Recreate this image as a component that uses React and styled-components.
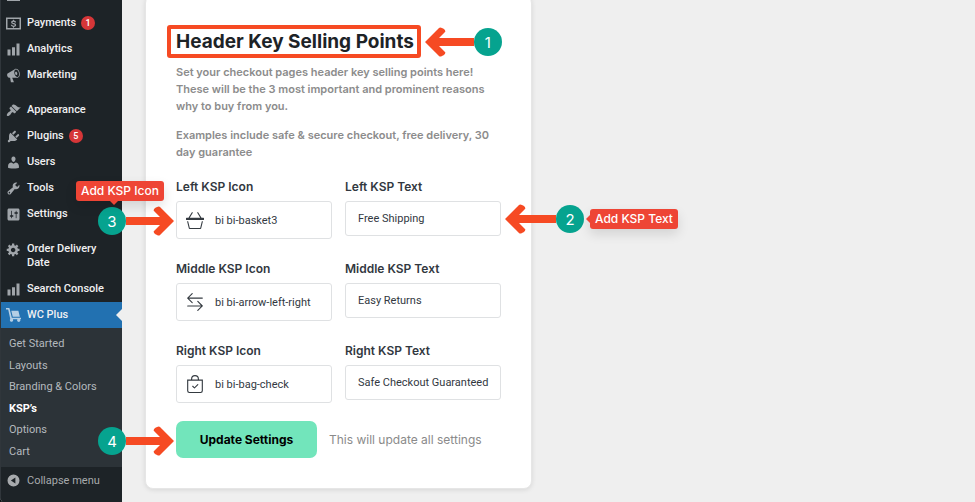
import React from "react";
import styled, { createGlobalStyle } from "styled-components";
import { BsBasket3, BsArrowLeftRight, BsBagCheck } from "react-icons/bs";

const GlobalStyle = createGlobalStyle`
  * {
    box-sizing: border-box;
  }
  body {
    margin: 0;
    background: #101417;
    font-family: Inter, "Liberation Sans", sans-serif;
    font-size: 11px;
  }
  input, button {
    font-family: inherit;
  }
`;

const Page = styled.div`
  display: flex;
  min-height: 100vh;
  background: #efefef;
  border-bottom-left-radius: 6px;
  overflow: hidden;
`;

const Sidebar = styled.nav`
  display: flex;
  flex-direction: column;
  flex: none;
  width: 122px;
  background: #1d2327;
  border-left: 1px solid #30363b;
  font-family: Roboto, "Liberation Sans", sans-serif;
`;

const MenuList = styled.ul`
  list-style: none;
  margin: 0;
  padding: 0;
`;

const MenuItem = styled.li`
  margin-top: ${(p) => (p.$spaced ? "9px" : "0")};
`;

const MenuLink = styled.a`
  position: relative;
  display: flex;
  align-items: flex-start;
  gap: 6px;
  padding: 6px 10px 6px 5px;
  line-height: 14px;
  font-weight: 500;
  color: #f0f0f1;
  text-decoration: none;
  background: ${(p) => (p.$active ? "#2271b1" : "transparent")};

  svg {
    flex: none;
    width: 15px;
    height: 15px;
    margin-bottom: -1px;
    fill: ${(p) => (p.$active ? "#b5cfe5" : "#a0a5aa")};
  }

  &::after {
    content: "";
    display: ${(p) => (p.$active ? "block" : "none")};
    position: absolute;
    right: 0;
    top: 7px;
    border: 6px solid transparent;
    border-left-width: 0;
    border-right-color: #efefef;
  }
`;

// bottom of the menu entry that is scrolled out of view
const ScrolledItem = styled.div`
  display: flex;
  align-items: flex-start;
  height: 10px;
  padding-left: 6px;

  &::before {
    content: "";
    width: 13px;
    height: 1px;
    background: #a0a5aa;
  }
`;

const Count = styled.span`
  display: inline-block;
  width: 14px;
  height: 14px;
  margin-left: 5px;
  border-radius: 50%;
  background: #d63638;
  color: #fff;
  font-size: 9px;
  text-align: center;
  vertical-align: top;
`;

const SubMenu = styled.ul`
  display: flex;
  flex-direction: column;
  flex: 1;
  justify-content: space-between;
  list-style: none;
  margin: 0;
  padding: 5px 8px;
  background: #2c3338;
`;

const SubLink = styled.a`
  display: block;
  line-height: 21px;
  font-size: 11px;
  font-weight: ${(p) => (p.$current ? 700 : 400)};
  color: ${(p) => (p.$current ? "#fff" : "#b4b9be")};
  text-decoration: none;
`;

const Collapse = styled.button`
  display: flex;
  align-items: center;
  gap: 6px;
  height: 36px;
  padding: 0 0 10px 5px;
  border: 0;
  background: none;
  color: #a7aaad;
  font-size: 11px;
  white-space: nowrap;

  svg {
    width: 15px;
    height: 15px;
    fill: #a7aaad;
  }
`;

const Main = styled.main`
  flex: 1;
  min-width: 0;
  padding: 0 23px 14px;
`;

const Card = styled.form`
  max-width: 387px;
  margin-top: -5px;
  padding: 29px 30px 30px;
  background: #fff;
  border: 1px solid #e6e6e6;
  border-radius: 8px;
  box-shadow: 0 1px 5px rgba(0, 0, 0, 0.1);
`;

const TitleRow = styled.div`
  display: flex;
  margin: 0 -9px;
`;

const Title = styled.h1`
  margin: 0;
  padding: 0 3px 0 5px;
  border: 4px solid #f64a23;
  border-radius: 3px;
  font-size: 19px;
  line-height: 25px;
  font-weight: 700;
  color: #1d2327;
  white-space: nowrap;
`;

const Intro = styled.div`
  display: grid;
  gap: 12px;
  margin: 6px 0 17px;

  p {
    margin: 0;
    font-size: 11px;
    line-height: 17px;
    font-weight: 600;
    color: #8c8c8c;
  }
`;

const Row = styled.div`
  display: grid;
  grid-template-columns: 1fr 1fr;
  align-items: start;
  gap: 13px;
  margin-bottom: 21px;

  &:last-of-type {
    margin-bottom: 18px;
  }
`;

const Field = styled.div`
  position: relative;
  min-width: 0;
`;

const Label = styled.label`
  display: block;
  margin-bottom: 5px;
  font-size: 12px;
  line-height: 18px;
  font-weight: 600;
  color: #32383f;
`;

const InputBox = styled.div`
  display: flex;
  align-items: center;
  gap: 11px;
  height: ${(p) => (p.$tall ? "38px" : "35px")};
  padding: 0 9px 0 ${(p) => (p.$tall ? "9px" : "12px")};
  border: 1px solid #dfe1e3;
  border-radius: 3px;
  background: #fff;

  svg {
    flex: none;
    color: #343a40;
  }

  input {
    flex: 1;
    min-width: 0;
    width: 100%;
    padding: 0;
    border: 0;
    outline: 0;
    background: none;
    font-family: Roboto, "Liberation Sans", sans-serif;
    font-size: 11px;
    color: #32383f;
  }
`;

const Actions = styled.footer`
  position: relative;
  display: flex;
  align-items: center;
  gap: 12px;
  font-size: 12px;
  color: #8a8a8a;
`;

const SaveButton = styled.button`
  width: 141px;
  height: 37px;
  border: 0;
  border-radius: 7px;
  background: #72e5bb;
  color: #000;
  font-size: 12px;
  font-weight: 700;
`;

const Marker = styled.div`
  position: absolute;
  z-index: 2;
  top: ${(p) => p.$top}px;
  ${(p) => (p.$left ? "right: calc(100% + 2px)" : "left: calc(100% + 4px)")};
  display: flex;
  flex-direction: ${(p) => (p.$left ? "row" : "row-reverse")};
  align-items: center;

  svg {
    display: block;
    flex: none;
    fill: #f64a23;
    transform: ${(p) => (p.$left ? "none" : "scaleX(-1)")};
  }
`;

const Circle = styled.span`
  position: relative;
  display: flex;
  align-items: center;
  justify-content: center;
  flex: none;
  width: 28px;
  height: 28px;
  border-radius: 50%;
  background: #06a38f;
  color: #fff;
  font-size: 15px;
`;

const Tip = styled.span`
  position: absolute;
  ${(p) =>
    p.$side === "top"
      ? "bottom: 34px; left: -22px;"
      : "left: 34px; top: 4px;"}
  padding: 0 5px;
  border-radius: 3px;
  background: #ee4535;
  box-shadow: 0 5px 12px rgba(0, 0, 0, 0.12);
  font-size: 12px;
  line-height: 20px;
  font-weight: 500;
  white-space: nowrap;

  &::before {
    content: "";
    position: absolute;
    border: 4px solid transparent;
    ${(p) =>
      p.$side === "top"
        ? "top: 100%; left: 34px; border-top-color: #ee4535; border-bottom: 0;"
        : "right: 100%; top: 6px; border-right-color: #ee4535; border-left: 0;"}
  }
`;

const icons = {
  bars: "M18 18V2h-4v16h4zm-6 0V7H8v11h4zm-6 0v-8H2v8h4z",
  payments:
    "M0 2h20v16H0zM2 4v12h16V4zM9.3 5h1.4v1.1c1.5.2 2.5 1 2.7 2.4h-1.8c-.2-.7-.7-1-1.6-1-.9 0-1.4.3-1.4.8 0 .6.6.8 1.7 1 1.9.4 3.2 1 3.2 2.6 0 1.4-1.1 2.3-2.8 2.5v1.1H9.3v-1.1c-1.7-.2-2.8-1.1-2.9-2.6h1.8c.2.8.8 1.2 1.9 1.2 1 0 1.6-.4 1.6-1 0-.6-.5-.8-1.8-1.1-1.9-.4-3-1-3-2.500 0-1.200.9-2.100 2.400-2.300z",
  marketing:
    "M18.15 5.94c.46 1.62.38 3.22-.02 4.48-.42 1.28-1.26 2.18-2.3 2.48-.16.06-.26.06-.4.06-.06.02-.12.02-.18.02-.06.02-.14.02-.22.02h-6.8l2.22 5.5c.02.14-.06.26-.14.34-.08.1-.24.16-.34.16H6.95c-.1 0-.26-.06-.34-.16-.08-.08-.16-.2-.14-.34l-1-5.5H4.25l-.02-.02c-.5.06-1.08-.18-1.54-.62s-.88-1.08-1.06-1.88c-.24-.8-.2-1.56-.02-2.2.18-.62.58-1.08 1.06-1.3l.02-.02 9-5.4c.1-.06.18-.1.24-.16.06-.04.14-.08.24-.12.16-.08.28-.12.5-.18 1.04-.3 2.24.1 3.22.98s1.84 2.24 2.26 3.86zm-2.58 5.98h-.02c.4-.1.74-.34 1.04-.7.58-.7.86-1.76.86-3.04 0-.64-.1-1.3-.28-1.98-.34-1.36-1.02-2.5-1.78-3.24s-1.68-1.1-2.46-.88c-.82.22-1.4.96-1.7 2-.32 1.04-.28 2.36.06 3.72.38 1.36 1 2.5 1.8 3.24.78.74 1.62 1.1 2.48.88zm-2.54-7.08c.22-.04.42-.02.62.04.38.16.76.48 1.02 1s.42 1.2.42 1.78c0 .3-.04.56-.12.8-.18.48-.44.84-.86.94-.34.1-.8-.06-1.14-.4s-.64-.86-.78-1.5c-.18-.62-.12-1.24.02-1.72s.48-.84.82-.94z",
  appearance:
    "M14.48 11.06L7.41 3.99l1.5-1.5c.5-.56 2.3-.47 3.51.32 1.21.8 1.43 1.28 2.91 2.1 1.18.64 2.45 1.26 4.45.85zm-.71.71L6.7 4.7 4.93 6.47c-.39.39-.39 1.02 0 1.41l1.06 1.06c.39.39.39 1.03 0 1.42-.6.6-1.43 1.11-2.21 1.69-.35.26-.7.53-1.01.84C1.43 14.23.4 16.08 1.4 17.07c.99 1 2.84-.03 4.18-1.36.31-.31.58-.66.85-1.02.57-.78 1.08-1.61 1.69-2.21.39-.39 1.02-.39 1.41 0l1.06 1.06c.39.39 1.02.39 1.41 0z",
  plugins:
    "M13.11 4.36L9.87 7.6 8 5.73l3.24-3.24c.35-.34 1.05-.2 1.56.32.52.51.66 1.21.31 1.55zm-8 1.77l.91-1.12 9.01 9.01-1.19.84c-.71.71-2.63 1.16-3.82 1.16H6.14L4.9 17.26c-.59.59-1.54.59-2.12 0-.59-.58-.59-1.53 0-2.12l1.24-1.24v-3.88c0-1.13.4-3.19 1.09-3.89zm7.26 3.97l3.24-3.24c.34-.35 1.04-.21 1.55.31.52.51.66 1.21.31 1.55l-3.24 3.25z",
  users:
    "M10 9.25c-2.27 0-2.73-3.44-2.73-3.44C7 4.02 7.82 2 9.97 2c2.16 0 2.98 2.02 2.71 3.81 0 0-.41 3.44-2.68 3.44zm0 2.57L12.72 10c2.39 0 4.52 2.33 4.52 4.53v2.49s-3.65 1.13-7.24 1.13c-3.65 0-7.24-1.13-7.24-1.13v-2.49c0-2.25 1.94-4.48 4.47-4.48z",
  tools:
    "M16.68 9.77c-1.34 1.34-3.3 1.67-4.95.99l-5.41 6.52c-.99.99-2.59.99-3.58 0s-.99-2.59 0-3.57l6.52-5.42c-.68-1.65-.35-3.61.99-4.95 1.28-1.28 3.12-1.62 4.72-1.06l-2.89 2.89 2.82 2.82 2.86-2.87c.53 1.58.18 3.39-1.08 4.65zM3.81 16.21c.4.39 1.04.39 1.43 0 .4-.4.4-1.04 0-1.43-.39-.4-1.03-.4-1.43 0-.39.39-.39 1.03 0 1.43z",
  settings:
    "M18 16V4c0-1.1-.9-2-2-2H4c-1.1 0-2 .9-2 2v12c0 1.1.9 2 2 2h12c1.1 0 2-.9 2-2zM8 11h1c.55 0 1 .45 1 1s-.45 1-1 1H8v1.5c0 .28-.22.5-.5.5s-.5-.22-.5-.5V13H6c-.55 0-1-.45-1-1s.45-1 1-1h1V5.5c0-.28.22-.5.5-.5s.5.22.5.5V11zm5-2h-1c-.55 0-1-.45-1-1s.45-1 1-1h1V5.5c0-.28.22-.5.5-.5s.5.22.5.5V7h1c.55 0 1 .45 1 1s-.45 1-1 1h-1v5.5c0 .28-.22.5-.5.5s-.5-.22-.5-.5V9z",
  gear: "M18 12h-2.18c-.17.7-.44 1.35-.81 1.93l1.54 1.54-2.1 2.1-1.54-1.54c-.58.36-1.23.63-1.91.79V19H8v-2.18c-.68-.16-1.33-.43-1.91-.79l-1.54 1.54-2.12-2.12 1.54-1.54c-.36-.58-.63-1.23-.79-1.91H1V9.03h2.17c.16-.7.44-1.35.8-1.94L2.43 5.55l2.1-2.1 1.54 1.54c.58-.37 1.24-.64 1.93-.81V2h3v2.18c.68.16 1.33.43 1.91.79l1.54-1.54 2.12 2.12-1.54 1.54c.36.59.64 1.24.8 1.94H18V12zm-8.5 1.5c1.66 0 3-1.34 3-3s-1.34-3-3-3-3 1.34-3 3 1.34 3 3 3z",
  cart: "M0 0h4.500l1 3.500 2.300 9.500H20v2h-1.200a2.200 2.200 0 1 1-3.600 0H9.200a2.200 2.200 0 1 1-3.500-.3L3.500 4.500 2.900 2H0zM7 3.500H16.500l2 8H9z",
  collapse:
    "M10 2a8 8 0 1 0 0 16 8 8 0 0 0 0-16zM12.5 6v8L6.5 10z",
};

const menu = [
  { label: "Payments", icon: "payments", count: 1 },
  { label: "Analytics", icon: "bars" },
  { label: "Marketing", icon: "marketing" },
  { label: "Appearance", icon: "appearance", spaced: true },
  { label: "Plugins", icon: "plugins", count: 5 },
  { label: "Users", icon: "users" },
  { label: "Tools", icon: "tools" },
  { label: "Settings", icon: "settings" },
  { label: "Order Delivery Date", icon: "gear", spaced: true },
  { label: "Search Console", icon: "bars" },
  { label: "WC Plus", icon: "cart", active: true },
];

const subMenu = [
  "Get Started",
  "Layouts",
  "Branding & Colors",
  "KSP’s",
  "Options",
  "Cart",
];

const rows = [
  { name: "Left", icon: BsBasket3, iconName: "bi bi-basket3", text: "Free Shipping" },
  {
    name: "Middle",
    icon: BsArrowLeftRight,
    iconName: "bi bi-arrow-left-right",
    text: "Easy Returns",
  },
  {
    name: "Right",
    icon: BsBagCheck,
    iconName: "bi bi-bag-check",
    text: "Safe Checkout Guaranteed",
  },
];

const MenuIcon = ({ name }) => (
  <svg viewBox="0 0 20 20" fillRule="evenodd" aria-hidden="true">
    <path d={icons[name]} />
  </svg>
);

const Step = ({ number, top, left, length = 51, tip, tipSide }) => (
  <Marker $top={top} $left={left}>
    <Circle>
      {number}
      {tip && <Tip $side={tipSide}>{tip}</Tip>}
    </Circle>
    <svg width={length} height="30" viewBox={`${51 - length} 0 ${length} 30`}>
      <path d="M0 11H37L31 5Q30 4 32 2L34 1Q36 0 37 1L51 15L37 29Q36 30 34 29L32 28Q30 26 31 25L37 19H0Z" />
    </svg>
  </Marker>
);

const App = () => {
  return (
    <>
      <GlobalStyle />
      <Page>
        <Sidebar>
          <ScrolledItem />
          <MenuList>
            {menu.map((item) => (
              <MenuItem key={item.label} $spaced={item.spaced}>
                <MenuLink href="#" $active={item.active}>
                  <MenuIcon name={item.icon} />
                  <span>
                    {item.label}
                    {item.count && <Count>{item.count}</Count>}
                  </span>
                </MenuLink>
              </MenuItem>
            ))}
          </MenuList>
          <SubMenu>
            {subMenu.map((label) => (
              <li key={label}>
                <SubLink href="#" $current={label === "KSP’s"}>
                  {label}
                </SubLink>
              </li>
            ))}
          </SubMenu>
          <Collapse type="button">
            <MenuIcon name="collapse" />
            Collapse menu
          </Collapse>
        </Sidebar>
        <Main>
          <Card onSubmit={(e) => e.preventDefault()}>
            <TitleRow>
              <Field>
                <Title>Header Key Selling Points</Title>
                <Step number={1} top={2} length={49} />
              </Field>
            </TitleRow>
            <Intro>
              <p>
                Set your checkout pages header key selling points here! These
                will be the 3 most important and prominent reasons why to buy
                from you.
              </p>
              <p>
                Examples include safe &amp; secure checkout, free delivery, 30
                day guarantee
              </p>
            </Intro>
            {rows.map(({ name, icon: Icon, iconName, text }) => (
              <Row key={name}>
                <Field>
                  <Label htmlFor={`${name}-icon`}>{name} KSP Icon</Label>
                  <InputBox $tall>
                    <Icon size={18} />
                    <input id={`${name}-icon`} defaultValue={iconName} />
                  </InputBox>
                  {name === "Left" && (
                    <Step
                      number={3}
                      top={28}
                      left
                      length={48}
                      tip="Add KSP Icon"
                      tipSide="top"
                    />
                  )}
                </Field>
                <Field>
                  <Label htmlFor={`${name}-text`}>{name} KSP Text</Label>
                  <InputBox>
                    <input id={`${name}-text`} defaultValue={text} />
                  </InputBox>
                  {name === "Left" && (
                    <Step
                      number={2}
                      top={26}
                      tip="Add KSP Text"
                      tipSide="right"
                    />
                  )}
                </Field>
              </Row>
            ))}
            <Actions>
              <SaveButton type="submit">Update Settings</SaveButton>
              <span>This will update all settings</span>
              <Step number={4} top={5} left length={48} />
            </Actions>
          </Card>
        </Main>
      </Page>
    </>
  );
};

export default App;
